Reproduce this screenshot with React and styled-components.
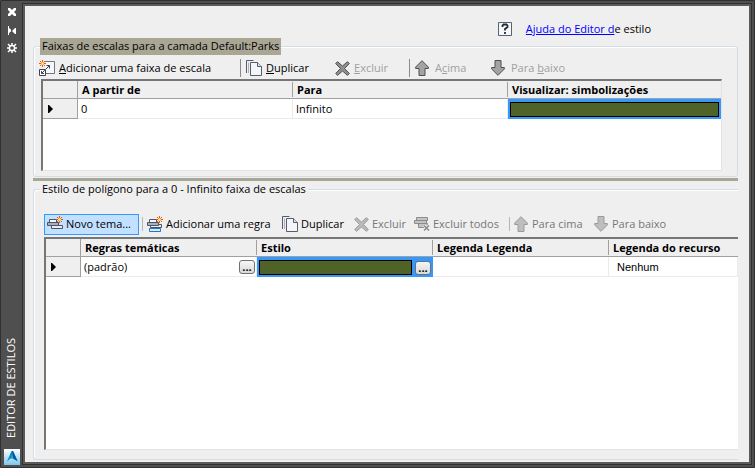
import React from "react";
import styled, { createGlobalStyle, css } from "styled-components";

const UI_FONT = '"Open Sans", "Noto Sans", sans-serif';

const GlobalStyle = createGlobalStyle`
  * { box-sizing: border-box; }
  body { margin: 0; background: #4f4f4f; font: 11px/16px ${UI_FONT}; color: #000; }
  button { font: inherit; }
`;

const Window = styled.div`
  display: flex;
  min-height: 100vh;
  padding: 2px;
  border: 1px solid #303030;
  border-radius: 2px;
  background: #4f4f4f;
`;

const Sidebar = styled.aside`
  display: flex;
  flex-direction: column;
  align-items: flex-start;
  width: 19px;
  padding-left: 1px;
`;

const SideButton = styled.button`
  display: flex;
  align-items: center;
  justify-content: center;
  width: 16px;
  height: 18px;
  padding: 0;
  border: 0;
  background: none;
`;

const SideTitle = styled.h1`
  margin: auto 0 11px;
  font: 11px/14px ${UI_FONT};
  color: #fff;
  writing-mode: vertical-rl;
  transform: rotate(180deg);
  white-space: nowrap;
`;

const Frame = styled.main`
  flex: 1;
  min-width: 0;
  display: flex;
  flex-direction: column;
  padding: 0 11px 2px 8px;
  border: 2px solid #5b5b5b;
  outline: 1px solid #303030;
  margin: 1px;
  background: #efefef;
`;

const HelpBar = styled.div`
  display: flex;
  align-items: center;
  justify-content: flex-end;
  gap: 14px;
  padding: 15px 87px 1px 0;
`;

const HelpLink = styled.a`
  color: #0000ff;
  text-decoration: underline;
`;

const Group = styled.fieldset`
  display: flex;
  flex-direction: column;
  min-width: 0;
  margin: 0;
  border: 1px solid #d3dde6;
  border-radius: 3px;
  box-shadow: inset 1px 1px 0 #fff;
  ${(p) =>
    p.$open
      ? css`
          flex: 1;
          padding: 15px 0 9px 10px;
          border-right: 0;
          border-radius: 3px 0 0 3px;
        `
      : css`
          padding: 2px 15px 5px 7px;
        `}
`;

const GroupTitle = styled.legend`
  height: 17px;
  margin-left: ${(p) => (p.$open ? "-4px" : "-1px")};
  padding: 0 2px;
  line-height: 16px;
  white-space: nowrap;
  background: ${(p) => (p.$active ? "#aaa694" : "#efefef")};
`;

const Splitter = styled.div`
  height: 3px;
  margin-top: 1px;
  background: #aaa694;
`;

const Toolbar = styled.div`
  display: flex;
  align-items: center;
  height: 22px;
  margin-left: ${(p) => (p.$outdent ? "-5px" : "0")};
  white-space: nowrap;
`;

const ToolButton = styled.button`
  display: flex;
  align-items: center;
  gap: ${(p) => p.$gap || 4}px;
  flex: 0 0 ${(p) => p.$w}px;
  height: 21px;
  padding: 0 2px;
  border: 1px solid transparent;
  background: transparent;
  color: #000;
  &:disabled { color: ${(p) => (p.$faint ? "#a0a0a0" : "#767676")}; }
  ${(p) =>
    p.$hot &&
    css`
      border-color: #3399ff;
      background: #c2e0ff;
    `}
  svg { flex: none; }
`;

const Divider = styled.span`
  width: 1px;
  height: ${(p) => (p.$light ? "14px" : "18px")};
  margin: ${(p) => (p.$light ? "0 1px 0 3px" : "0 2px 0 1px")};
  background: ${(p) => (p.$light ? "#b8b8b8" : "#8a8a8a")};
`;

const GridBox = styled.div`
  flex: 1 0 auto;
  min-height: 92px;
  background: #fff;
  border: 1px solid #e3e3e3;
  border-top: 2px solid #767676;
  border-left: 2px solid #767676;
  ${(p) => p.$open && "border-right: 0; margin-top: 2px;"}
`;

const Table = styled.table`
  width: 100%;
  table-layout: fixed;
  border-collapse: separate;
  border-spacing: 0;
`;

const HeadCell = styled.th`
  height: 18px;
  padding: 0 0 0 4px;
  border-bottom: 1px solid #a0a0a0;
  background: linear-gradient(#a0a0a0, #a0a0a0) right center / 1px 15px no-repeat #efefef;
  text-align: left;
  font: bold 11px/16px ${UI_FONT};
  white-space: nowrap;
  &:last-child { background: #efefef; }
`;

const CornerCell = styled.td`
  height: 18px;
  padding: 0 0 0 5px;
  border-right: 1px solid #a0a0a0;
  border-bottom: 1px solid #a0a0a0;
  background: #efefef;
  svg { display: block; }
`;

const Cell = styled.td`
  height: 20px;
  padding: 0 1px 0 3px;
  border-right: 1px solid #ebebeb;
  border-bottom: 1px solid #ebebeb;
  white-space: nowrap;
  ${(p) =>
    p.$selected &&
    css`
      padding: 3px 2px 2px;
      border: 0;
      background: #3399ff;
    `}
  ${(p) =>
    p.$plain &&
    css`
      padding-left: 8px;
      font: 11px/16px "Liberation Sans", Arial, sans-serif;
    `}
`;

const CellRow = styled.div`
  display: flex;
  align-items: center;
  justify-content: space-between;
  gap: 3px;
`;

const Swatch = styled.div`
  flex: 1;
  height: 15px;
  border: 1px solid #000;
  background: #4f6228;
`;

const DotsButton = styled.button`
  width: 16px;
  height: 14px;
  padding: 0;
  border: 1px solid #707070;
  border-radius: 3px;
  background: linear-gradient(#f6f6f6, #d8d8d8);
  font: bold 11px/8px ${UI_FONT};
`;

const Close = () => (
  <svg width="8" height="8" viewBox="0 0 8 8" aria-hidden="true">
    <path d="M0 0h2l2 2 2-2h2v2L6 4l2 2v2H6L4 6 2 8H0V6l2-2-2-2z" fill="#fff" />
  </svg>
);
const AutoHide = () => (
  <svg width="8" height="9" viewBox="0 0 8 9" aria-hidden="true">
    <path d="M0 0h1v9H0zM1 2l2 1.500v2L1 7zM7 2h1v6H7L4 5z" fill="#fff" />
  </svg>
);
const Gear = () => (
  <svg width="10" height="10" viewBox="0 0 10 10" aria-hidden="true">
    <circle cx="5" cy="5" r="2.600" fill="none" stroke="#fff" strokeWidth="1.500" />
    <path d="M5 0v2M5 8v2M0 5h2M8 5h2M1 1l2 2M7 7l2 2M9 1 7 3M1 9l2-2" stroke="#fff" strokeWidth="1.500" />
  </svg>
);
const Logo = () => (
  <svg width="16" height="16" viewBox="0 0 16 16" aria-hidden="true">
    <defs>
      <linearGradient id="sky" x2="0" y2="1">
        <stop stopColor="#fff" />
        <stop offset="1" stopColor="#7cc6ea" />
      </linearGradient>
    </defs>
    <path fill="url(#sky)" d="M0 0h16v16H0z" />
    <path d="M7.500 2h1.500l4.500 10-4-2.500H6.500L3 12.500z" fill="#0e83c8" />
    <path d="M8 2h1l4.500 10-4-2z" fill="#07579b" />
    <path d="M8 5.500 9 9H7z" fill="#2ba6e4" />
  </svg>
);
const Help = () => (
  <svg width="14" height="14" viewBox="0 0 14 14" aria-hidden="true">
    <path d="M.5.500h13v13H.5z" fill="#f5f7fa" stroke="#59616e" />
    <path d="M4.500 5V3.500l1-1h3l1 1V5L7 7v1.500M7 10v2" fill="none" stroke="#222b3a" strokeWidth="1.800" />
  </svg>
);
const Spark = ({ x, y }) => (
  <g transform={`translate(${x} ${y})`}>
    <path d="M3.500 0v7M0 3.500h7M1 1l5 5M6 1 1 6" stroke="#e8531a" />
    <circle cx="3.500" cy="3.500" r="1.500" fill="#ffe86a" />
  </g>
);
const AddRange = () => (
  <svg width="16" height="16" viewBox="0 0 16 16" aria-hidden="true">
    <path d="M6 1.500h9.500v12H7" fill="#f5f7fa" stroke="#6b7789" />
    <path d="M.5 9.500h6v6h-6z" fill="#fff" stroke="#3c4350" />
    <path d="M2.500 11v2.500H5M3 13l3-3M7 9l3.500-3.500M7.500 5.500h3v3" fill="none" stroke="#3c4350" />
    <Spark x={0} y={0} />
  </svg>
);
const Layers = ({ extra }) => (
  <svg width="16" height="16" viewBox="0 0 16 16" aria-hidden="true">
    {extra && <path d="M2.500 12.500h11v3h-11z" fill="#d7ebff" stroke="#2775c2" />}
    <path d="M4.500 9.500h11v3h-11z" fill="#e9edf2" stroke="#4b5566" transform={extra ? "translate(-1 -1)" : ""} />
    <path d="M.5 6.500h11v3H.5z" fill="#a9b0b9" stroke="#4b5566" />
    <path d="M2.500 6V3.500h7V6" fill="#f5f7fa" stroke="#4b5566" />
    <Spark x={9} y={0} />
  </svg>
);
const Copy = () => (
  <svg width="16" height="16" viewBox="0 0 16 16" aria-hidden="true">
    <path d="M.5 13V.5h7" fill="none" stroke="#555e6e" />
    <path d="M4.500 2.500h7l4 4v9h-11z" fill="#f3f5f8" stroke="#555e6e" />
    <path d="M11.500 2.500v4h4" fill="#dde1e8" stroke="#555e6e" />
    <path d="M2.500 13V2.500" stroke="#aab0ba" />
  </svg>
);
const Cross = ({ pale }) => (
  <svg width="15" height="15" viewBox="0 0 15 15" aria-hidden="true">
    <path
      d="M.7 2.500 2.500.700 7.500 5 12.500.700l1.800 1.800-4.800 5 4.800 5-1.800 1.800-5-4.300-5 4.300L.7 12.500l4.800-5z"
      fill={pale ? "#bababa" : "#909090"}
      stroke={pale ? "#9c9c9c" : "#4c4c4c"}
    />
  </svg>
);
const ClearAll = () => (
  <svg width="16" height="16" viewBox="0 0 16 16" aria-hidden="true">
    <path d="M2.500 1.500h11v3h-11zM.5 4.500h12v3H.5zM4.500 7.500h9v4h-9z" fill="#c4c4c4" stroke="#8b8b8b" />
    <path d="M10 9.500l5 5M15 9.500l-5 5" stroke="#efefef" strokeWidth="3" />
    <path d="M10 9.500l5 5M15 9.500l-5 5" stroke="#8b8b8b" strokeWidth="1.500" />
  </svg>
);
const Arrow = ({ down, pale }) => (
  <svg width="14" height="16" viewBox="0 0 14 16" aria-hidden="true">
    <path
      d="M7 .7 13.300 7v1.500h-3.300v7H4v-7H.7V7z"
      transform={down ? "rotate(180 7 8)" : ""}
      fill={pale ? "#bebebe" : "#a3a3a3"}
      stroke={pale ? "#9a9a9a" : "#4f4f4f"}
    />
  </svg>
);
const RowMark = () => (
  <svg width="5" height="8" viewBox="0 0 5 8" aria-hidden="true">
    <path d="M0 0h1l4 4-4 4H0z" />
  </svg>
);

const SymbolCell = ({ onPick }) => (
  <Cell $selected>
    <CellRow>
      <Swatch role="img" aria-label="Simbolização" />
      {onPick && <DotsButton>...</DotsButton>}
    </CellRow>
  </Cell>
);

export default function App() {
  return (
    <>
      <GlobalStyle />
      <Window>
        <Sidebar>
          <SideButton aria-label="Fechar"><Close /></SideButton>
          <SideButton aria-label="Ocultar automaticamente"><AutoHide /></SideButton>
          <SideButton aria-label="Propriedades"><Gear /></SideButton>
          <SideTitle>EDITOR DE ESTILOS</SideTitle>
          <Logo />
        </Sidebar>
        <Frame>
          <HelpBar>
            <Help />
            <span><HelpLink href="#ajuda">Ajuda do Editor d</HelpLink>e estilo</span>
          </HelpBar>

          <Group>
            <GroupTitle $active>Faixas de escalas para a camada Default:Parks</GroupTitle>
            <Toolbar $outdent>
              <ToolButton $w={203}><AddRange /><span><u>A</u>dicionar uma faixa de escala</span></ToolButton>
              <Divider />
              <ToolButton $w={89}><Copy /><span><u>D</u>uplicar</span></ToolButton>
              <ToolButton $w={76} disabled $faint><Cross /><span><u>E</u>xcluir</span></ToolButton>
              <Divider />
              <ToolButton $w={76} disabled $faint $gap={6}><Arrow /><span>A<u>c</u>ima</span></ToolButton>
              <ToolButton $w={80} disabled $faint $gap={6}><Arrow down /><span>Para <u>b</u>aixo</span></ToolButton>
            </Toolbar>
            <GridBox>
              <Table>
                <colgroup>
                  <col width="35" /><col width="215" /><col width="215" /><col />
                </colgroup>
                <thead>
                  <tr>
                    <CornerCell />
                    <HeadCell>A partir de</HeadCell>
                    <HeadCell>Para</HeadCell>
                    <HeadCell>Visualizar: simbolizações</HeadCell>
                  </tr>
                </thead>
                <tbody>
                  <tr>
                    <CornerCell><RowMark /></CornerCell>
                    <Cell>0</Cell>
                    <Cell>Infinito</Cell>
                    <SymbolCell />
                  </tr>
                </tbody>
              </Table>
            </GridBox>
          </Group>

          <Splitter />

          <Group $open>
            <GroupTitle $open>Estilo de polígono para a 0 - Infinito faixa de escalas</GroupTitle>
            <Toolbar>
              <ToolButton $w={95} $gap={3} $hot><Layers /><span>Novo tema...</span></ToolButton>
              <Divider $light />
              <ToolButton $w={135} $gap={3}><Layers extra /><span>Adicionar uma regra</span></ToolButton>
              <ToolButton $w={72} $gap={3}><Copy /><span>Duplicar</span></ToolButton>
              <ToolButton $w={60} $gap={3} disabled><Cross pale /><span>Excluir</span></ToolButton>
              <ToolButton $w={95} $gap={3} disabled><ClearAll /><span>Excluir todos</span></ToolButton>
              <Divider $light />
              <ToolButton $w={80} $gap={4} disabled><Arrow pale /><span>Para cima</span></ToolButton>
              <ToolButton $w={80} $gap={4} disabled><Arrow down pale /><span>Para baixo</span></ToolButton>
            </Toolbar>
            <GridBox $open>
              <Table>
                <colgroup>
                  <col width="35" /><col width="176" /><col width="176" /><col width="176" /><col />
                </colgroup>
                <thead>
                  <tr>
                    <CornerCell />
                    <HeadCell>Regras temáticas</HeadCell>
                    <HeadCell>Estilo</HeadCell>
                    <HeadCell>Legenda Legenda</HeadCell>
                    <HeadCell>Legenda do recurso</HeadCell>
                  </tr>
                </thead>
                <tbody>
                  <tr>
                    <CornerCell><RowMark /></CornerCell>
                    <Cell><CellRow>(padrão)<DotsButton>...</DotsButton></CellRow></Cell>
                    <SymbolCell onPick />
                    <Cell />
                    <Cell $plain>Nenhum</Cell>
                  </tr>
                </tbody>
              </Table>
            </GridBox>
          </Group>
        </Frame>
      </Window>
    </>
  );
}
